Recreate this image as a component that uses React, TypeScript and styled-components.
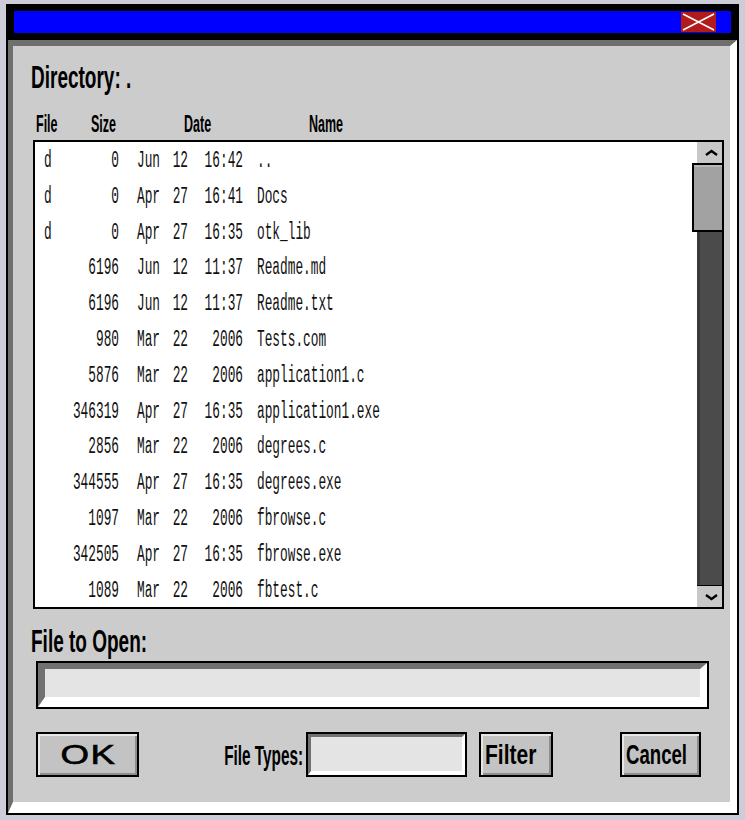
import React from "react";
import styled, { createGlobalStyle } from "styled-components";

const GlobalStyle = createGlobalStyle`
  * { box-sizing: border-box; }
  html, body {
    margin: 0;
    padding: 0;
    background: #cdcdda;
  }
  body {
    font-family: "Liberation Sans", Arial, sans-serif;
    color: #000;
  }
`;

const Window = styled.div`
  width: 733px;
  height: 811px;
  margin: 4px 0 0 6px;
  border: 2px solid #000;
  background: #000;
  display: flex;
  flex-direction: column;
`;

const TitleBar = styled.div`
  padding: 5px 6px 7px;
`;

const TitleInner = styled.div`
  height: 22px;
  background: #0000ff;
  display: flex;
  align-items: center;
  justify-content: flex-end;
  padding-right: 15px;
`;

const CloseBox = styled.div`
  width: 35px;
  height: 20px;
  background: #b31a1a;
  display: flex;
`;

const Body = styled.div`
  flex: 1;
  background: #cccccc;
  border-style: solid;
  border-color: #6f6f6f #ffffff #ffffff #6f6f6f;
  border-width: 6px 7px 11px 5px;
  display: flex;
  flex-direction: column;
`;

const Heading = styled.div<{ $top: number }>`
  margin-top: ${(p) => p.$top}px;
  height: 24px;
  line-height: 24px;
  padding-left: 18px;
  font-size: 19px;
  font-weight: bold;
  white-space: pre;
  transform: scaleY(1.64);
`;

const ColHeaders = styled.div`
  margin-top: 24.5px;
  height: 20px;
  line-height: 20px;
  padding-left: 23px;
  display: flex;
  font-size: 12.5px;
  font-weight: bold;
  transform: scaleY(1.87);
`;

const ColHead = styled.div<{ $w: number }>`
  width: ${(p) => p.$w}px;
`;

const ListBox = styled.div`
  margin: 5.5px 6px 0 20px;
  height: 469px;
  border: 2px solid #000;
  display: flex;
`;

const List = styled.div`
  flex: 1;
  background: #fff;
  padding-top: 2px;
  overflow: hidden;
`;

const Row = styled.div`
  height: 35.8px;
  display: flex;
  align-items: center;
  padding-left: 9px;
  font-family: "Liberation Mono", "Courier New", monospace;
  font-size: 12.8px;
  line-height: 16px;
  color: #111;
  white-space: pre;
  transform: scaleY(1.8);
`;

const Cell = styled.div<{ $w?: number; $right?: boolean; $gap?: number }>`
  ${(p) => (p.$w ? `width: ${p.$w}px;` : "")}
  margin-left: ${(p) => p.$gap ?? 0}px;
  text-align: ${(p) => (p.$right ? "right" : "left")};
  flex: none;
`;

const Scrollbar = styled.div`
  width: 25px;
  display: flex;
  flex-direction: column;
`;

const ArrowButton = styled.div<{ $down?: boolean }>`
  height: ${(p) => (p.$down ? 22 : 21)}px;
  background: #c8c8c8;
  display: flex;
  align-items: center;
  justify-content: flex-end;
  padding-right: 4px;
  ${(p) => (p.$down ? "border-top: 1px solid #000;" : "")}
`;

const Track = styled.div`
  flex: 1;
  background: #4b4b4b;
  box-shadow: inset 3px 0 0 #3a3a3a;
  display: flex;
  flex-direction: column;
`;

const Thumb = styled.div`
  height: 69px;
  margin: 0 -2px 0 -5px;
  background: #a2a2a2;
  border: 2px solid #000;
  box-shadow: inset 0 2px 0 #b8b8b8;
  position: relative;
  z-index: 1;
`;

const Field = styled.div<{ $w?: number }>`
  border: 2px solid #000;
  ${(p) => (p.$w ? `width: ${p.$w}px; flex: none;` : "")}
`;

const FieldInner = styled.div<{ $thin?: boolean }>`
  height: 100%;
  background: #e4e4e4;
  border-style: solid;
  border-color: #717171 #ffffff #ffffff #717171;
  border-width: ${(p) => (p.$thin ? "3px 3px 4px 3px" : "6px 7px 10px 7px")};
`;

const OpenField = styled(Field)`
  margin: 7.5px 21px 0 23px;
  height: 48px;
`;

const ButtonRow = styled.div`
  margin-top: 23px;
  height: 45px;
  padding-left: 23px;
  display: flex;
  align-items: stretch;
`;

const Button = styled.div<{ $w: number; $gap?: number; $center?: boolean }>`
  width: ${(p) => p.$w}px;
  margin-left: ${(p) => p.$gap ?? 0}px;
  flex: none;
  background: #c3c3c3;
  border: 2px solid #000;
  box-shadow: inset 2px 2px 0 #e6e6e6, inset -2px -2px 0 #8e8e8e;
  display: flex;
  align-items: center;
  justify-content: ${(p) => (p.$center ? "center" : "flex-start")};
  padding-left: ${(p) => (p.$center ? 2 : 4)}px;
`;

const OkText = styled.span`
  display: inline-block;
  font-size: 27px;
  line-height: 28px;
  letter-spacing: 1px;
  -webkit-text-stroke: 0.6px #000;
  transform: scaleX(1.36);
`;

const ButtonText = styled.span<{ $size: number; $sy: number }>`
  display: inline-block;
  font-size: ${(p) => p.$size}px;
  line-height: 24px;
  font-weight: bold;
  transform: scaleY(${(p) => p.$sy});
`;

const TypesLabel = styled.div`
  width: 84px;
  margin-left: 80px;
  flex: none;
  display: flex;
  align-items: center;
  justify-content: flex-end;
  font-size: 15.3px;
  font-weight: bold;
  white-space: pre;
  transform: scaleY(1.83);
`;

const TypesField = styled(Field)`
  margin-left: 3px;
`;

type Entry = [string, string, string, string, string, string];

const entries: Entry[] = [
  ["d", "0", "Jun", "12", "16:42", ".."],
  ["d", "0", "Apr", "27", "16:41", "Docs"],
  ["d", "0", "Apr", "27", "16:35", "otk_lib"],
  ["", "6196", "Jun", "12", "11:37", "Readme.md"],
  ["", "6196", "Jun", "12", "11:37", "Readme.txt"],
  ["", "980", "Mar", "22", "2006", "Tests.com"],
  ["", "5876", "Mar", "22", "2006", "application1.c"],
  ["", "346319", "Apr", "27", "16:35", "application1.exe"],
  ["", "2856", "Mar", "22", "2006", "degrees.c"],
  ["", "344555", "Apr", "27", "16:35", "degrees.exe"],
  ["", "1097", "Mar", "22", "2006", "fbrowse.c"],
  ["", "342505", "Apr", "27", "16:35", "fbrowse.exe"],
  ["", "1089", "Mar", "22", "2006", "fbtest.c"],
];

const CloseIcon = () => (
  <svg width="35" height="20" viewBox="0 0 35 20">
    <path d="M2 2 L33 18 M2 18 L33 2" stroke="#fff" strokeWidth="1.6" fill="none" />
  </svg>
);

const Chevron = ({ down }: { down?: boolean }) => (
  <svg width="13" height="8" viewBox="0 0 13 8">
    <path
      d={down ? "M1 2 L6.5 6 L12 2" : "M1 6 L6.5 2 L12 6"}
      stroke="#000"
      strokeWidth="2.4"
      fill="none"
    />
  </svg>
);

const App: React.FC = () => {
  return (
    <>
      <GlobalStyle />
      <Window>
        <TitleBar>
          <TitleInner>
            <CloseBox>
              <CloseIcon />
            </CloseBox>
          </TitleInner>
        </TitleBar>
        <Body>
          <Heading $top={20}>Directory: .</Heading>
          <ColHeaders>
            <ColHead $w={55}>File</ColHead>
            <ColHead $w={93}>Size</ColHead>
            <ColHead $w={125}>Date</ColHead>
            <ColHead $w={60}>Name</ColHead>
          </ColHeaders>
          <ListBox>
            <List>
              {entries.map((e, i) => (
                <Row key={i}>
                  <Cell $w={9}>{e[0]}</Cell>
                  <Cell $w={66} $right>
                    {e[1]}
                  </Cell>
                  <Cell $w={23} $gap={18}>
                    {e[2]}
                  </Cell>
                  <Cell $w={28} $right>
                    {e[3]}
                  </Cell>
                  <Cell $w={55} $right>
                    {e[4]}
                  </Cell>
                  <Cell $gap={14}>{e[5]}</Cell>
                </Row>
              ))}
            </List>
            <Scrollbar>
              <ArrowButton>
                <Chevron />
              </ArrowButton>
              <Track>
                <Thumb />
              </Track>
              <ArrowButton $down>
                <Chevron down />
              </ArrowButton>
            </Scrollbar>
          </ListBox>
          <Heading $top={20.5}>File to Open:</Heading>
          <OpenField>
            <FieldInner />
          </OpenField>
          <ButtonRow>
            <Button $w={103} $center>
              <OkText>OK</OkText>
            </Button>
            <TypesLabel>File Types:</TypesLabel>
            <TypesField $w={161}>
              <FieldInner $thin />
            </TypesField>
            <Button $w={74} $gap={12}>
              <ButtonText $size={21} $sy={1.32}>
                Filter
              </ButtonText>
            </Button>
            <Button $w={81} $gap={67}>
              <ButtonText $size={18.6} $sy={1.5}>
                Cancel
              </ButtonText>
            </Button>
          </ButtonRow>
        </Body>
      </Window>
    </>
  );
};

export default App;
